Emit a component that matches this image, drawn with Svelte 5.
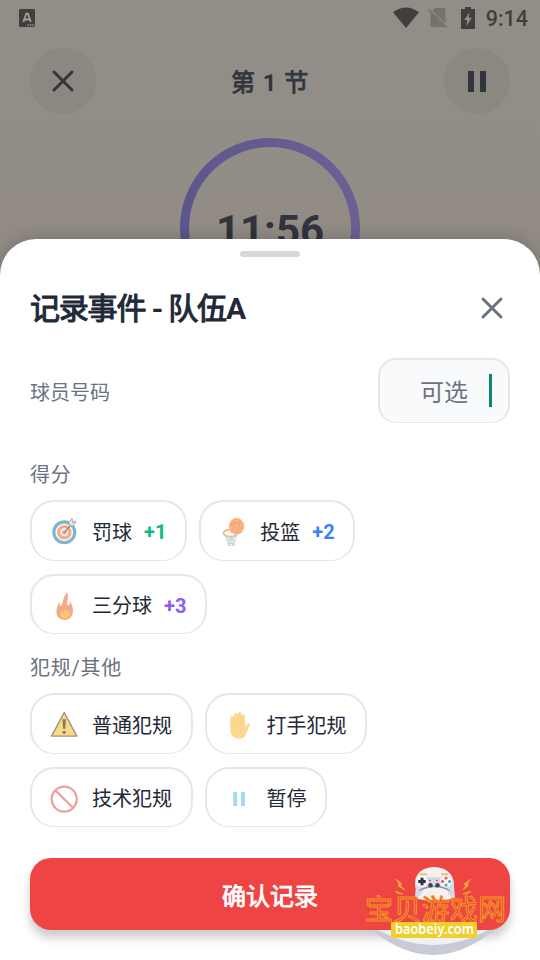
<script>
  const scores = [
    { label: '罚球', icon: 'target', points: '+1', color: '#10b981' },
    { label: '投篮', icon: 'basket', points: '+2', color: '#3b82f6' },
    { label: '三分球', icon: 'fire', points: '+3', color: '#8b5cf6' }
  ];
  const fouls = [
    { label: '普通犯规', icon: 'warning' },
    { label: '打手犯规', icon: 'hand' },
    { label: '技术犯规', icon: 'ban' },
    { label: '暂停', icon: 'pause' }
  ];
</script>

{#snippet icon(name)}
  <svg class="emoji" class:narrow={name === 'basket'} viewBox="0 0 28 28">
    {#if name === 'target'}
      <circle cx="14.3" cy="14.3" r="12" fill="#7fb2cf" />
      <circle cx="14.3" cy="14.3" r="8.9" fill="#f5f7f7" />
      <circle cx="14.3" cy="14.3" r="7.2" fill="#f4ac8a" />
      <circle cx="14.3" cy="14.3" r="4" fill="#fbf2ec" />
      <circle cx="14.3" cy="14.3" r="2.4" fill="#f2ac90" />
      <path d="M14.5 14.5 22 5.5" stroke="#8d8d8d" stroke-width="1.3" />
      <path d="M19.5 7.5 19 4.5l3-4 .5 4 3.5-.7-3.3 4.4z" fill="#f4f4f4" stroke="#9b9b9b" stroke-width=".9" />
      <path d="m21 6.5 5-5" stroke="#aaa" stroke-width=".8" />
    {:else if name === 'basket'}
      <g transform="translate(3 0) scale(.92 1)">
        <ellipse cx="9.2" cy="15.1" rx="7.7" ry="3.5" fill="#fffaf5" stroke="#f6b48b" stroke-width="1.8" />
        <g fill="none" stroke="#c0d6da" stroke-width=".9">
          <path d="M4 17 7.2 27.5M8 18l1 9.5M12 18l-.5 9.5M16 17l-3 10.5M4 18l5 5 4 4.5M8 18l6 6M16 17l-7 6-2 4.5M12 18l-6 6" />
          <path d="M5 22h10M6 25.5h8M7.2 27.5h6" />
        </g>
        <circle cx="15.8" cy="8.3" r="8.3" fill="#fbb483" />
        <path d="M10.4 2.2Q19.6 6 23.1 12M8.1 6Q15.6 7 20.1 15M13.6.5q-1 9-3.3 14M19.6 1.2q-.5 7-5 15M23.4 6q-5-2-14 0" fill="none" stroke="#ee9f74" stroke-width=".7" />
      </g>
    {:else if name === 'fire'}
      <g transform="translate(1.8 0) scale(.9 1)">
        <path d="M16.5.1c3 4.2.3 7.8.6 11.2.1 1.6.8 2.4 1.7 2 1.4-.5 1.4-2 .9-3.700 3 2 3.700 5.400 3.700 9.400 0 5.300-3.900 8.900-9.300 8.900-5.400 0-9-3.600-9-8.200 0-4 2.400-6.100 2.200-9.600 1.500 1.300 1.900 2.500 1.800 4.400 2.600-1.600 3.100-3.800 3.500-6.400.5-3 3.200-5 3.900-8Z" fill="#f2aa88" />
        <path d="M14.7 14.6c1.700 3.500-.1 4.100 1 5.100 1 .6 1.400-.6 1.200-1.600 2.200 1.200 3 2.900 2 5.200-.9 2.400-2.600 3.300-5 3.300-3.100 0-4.800-2.100-4.500-4.300.3-1.800 1.500-2.600 1.700-4.100q1.400 1.400 1.100 3c2.300-1.700 3.100-3.800 2.500-6.600Z" fill="#fccd66" />
      </g>
    {:else if name === 'warning'}
      <path d="M14.2 1.6 26.9 25.1H1.5Z" fill="#fbd983" stroke="#999284" stroke-width="1.3" stroke-linejoin="round" />
      <path d="M12.5 8.3h3.3l-.5 9.4h-2.3z" fill="#827966" /><circle cx="14.2" cy="21.3" r="1.6" fill="#827966" />
    {:else if name === 'hand'}
      <g transform="translate(2 .5) scale(.9 .96)">
        <g fill="none" stroke="#fbd98f" stroke-linecap="round" stroke-width="4">
          <path d="M5.8 15V6.8M10 14V3.6M14.2 14V2.5M18.2 15V5" />
        </g>
        <path d="M3.8 11h16.4v6.2l1.9-3.6q1.1-1.8 2.6-1.2c1.1.6.6 1.8.1 3l-3.9 8.7q-2.4 4.9-7.6 4.3C7.4 28.2 3.8 24.4 3.8 19Z" fill="#fbd98f" />
        <path d="M20.1 17q-5.8 0-6.8 6.5M7.9 6v8M12.1 4v9M16.2 4v10" fill="none" stroke="#f2cb80" stroke-width=".7" />
      </g>
    {:else if name === 'ban'}
      <circle cx="14.2" cy="14.1" r="12.5" fill="none" stroke="#eba19d" stroke-width="2.3" />
      <path d="m5.5 5.5 17.5 17.3" stroke="#eba19d" stroke-width="2.3" />
    {:else}
      <path d="M8.2 7h4v14h-4zM16 7h4v14h-4z" fill="#9fdbed" />
    {/if}
  </svg>
{/snippet}

{#snippet cross()}
  <svg class="cross" viewBox="0 0 30 30"><path d="m6 6 18 18M24 6 6 24" /></svg>
{/snippet}

<div class="screen">
  <div class="status">
    <svg class="ime" viewBox="0 0 16 18">
      <rect width="16" height="18" rx="1.2" fill="#403f3b" />
      <path d="m4.3 13 3-8.4h1.6L11.8 13M5.5 10.5h5" fill="none" stroke="#a19e96" stroke-width="1.8" />
      <path d="M8.5 16h1.4m1 0h1.4m1 0h1.4" stroke="#a19e96" stroke-width="1.3" />
    </svg>
    <div class="signals">
      <svg width="26" height="22" viewBox="0 0 26 22"><path d="M0 5.3Q13-4.5 26 5.3L13 21Z" fill="#403f3b" /></svg>
      <svg width="20" height="22" viewBox="0 0 20 22">
        <path d="M7 1h9q1.5 0 1.5 1.5v14L4.5 3.5ZM2.5 5.5 17 19.500q-.4.5-1 .5H4q-1.500 0-1.500-1.500Z" fill="#74726d" />
        <path d="m.7 2.6 18 18" stroke="#74726d" stroke-width="1.6" />
      </svg>
      <svg width="14" height="22" viewBox="0 0 14 22">
        <path d="M4 0h6v2h4v20H0V2h4Z" fill="#403f3b" /><path d="M8.6 5.2 3.2 13h3l-.7 6 5.3-8.2H7.7Z" fill="#918e87" />
      </svg>
      <span class="clock">9:14</span>
    </div>
  </div>

  <header>
    <button class="round" aria-label="关闭">{@render cross()}</button>
    <h2>第 <em>1</em> 节</h2>
    <button class="round" aria-label="暂停"><svg width="18" height="21" viewBox="0 0 18 21"><path d="M0 0h6v21H0zM12 0h6v21h-6z" fill="#32353f" /></svg></button>
  </header>

  <div class="timer">
    <svg viewBox="0 0 180 180">
      <defs><linearGradient id="ring"><stop stop-color="#5d568d" /><stop offset="1" stop-color="#6c6093" /></linearGradient></defs>
      <circle cx="90" cy="90" r="85.5" fill="none" stroke="url(#ring)" stroke-width="9" />
    </svg>
    <span>11:56</span>
  </div>

  <section class="sheet">
    <div class="handle"></div>
    <div class="title-row">
      <h1>记录事件 <em>-</em> 队伍<em>A</em></h1>
      <button class="close" aria-label="关闭">{@render cross()}</button>
    </div>
    <div class="player">
      <span class="caption">球员号码</span>
      <div class="field"><span>可选</span><i></i></div>
    </div>
    <h3>得分</h3>
    <div class="chips">
      {#each scores as item}
        <button class="chip">{@render icon(item.icon)}<span>{item.label}</span><b style="color: {item.color}">{item.points}</b></button>
      {/each}
    </div>
    <h3 class="second">犯规/其他</h3>
    <div class="chips">
      {#each fouls as item}
        <button class="chip">{@render icon(item.icon)}<span>{item.label}</span></button>
      {/each}
    </div>
    <button class="confirm">确认记录</button>
  </section>

  <svg class="watermark" viewBox="0 0 160 100">
    <path d="M12 70Q73 120 134 70Z" fill="#c9cad8" />
    <path d="M18 70Q73 100 128 70Z" fill="#f1f1f3" />
    <path d="M55 25Q55 8 74 7Q93 8 94 25L91 39Q75 43 58 39Z" fill="#f4f1ef" />
    <path d="M60 14.500q4-1 7 0M81 14.500q4-1 7 0" stroke="#e9b945" stroke-width="1.500" fill="none" />
    <path d="M56 17q5-3 12 0h12q7-3 12 0 2 4 2 10l1 10q-2 3-5-1l-4-7q-11-5-22 0l-4 7q-4 4-5 0l1-10q-1-6 0-9Z" fill="#d8dae5" />
    <path d="M59 30.500q16-8 31 0" stroke="#8f95a4" stroke-width="1.300" fill="none" />
    <circle cx="62" cy="21.5" r="6" fill="#f4f3f5" /><circle cx="86" cy="21.5" r="6" fill="#f4f3f5" />
    <path d="M62 17.8v7.5M58.2 21.5h7.500" stroke="#28344a" stroke-width="3" />
    <g fill="#e85656"><circle cx="86" cy="18" r="1.5" /><circle cx="82.5" cy="21.5" r="1.5" /></g>
    <g fill="#4ba3b8"><circle cx="89.5" cy="21.5" r="1.5" /><circle cx="86" cy="25" r="1.5" /></g>
    <circle cx="70.500" cy="25.300" r="2.200" fill="#35445b" /><circle cx="77.500" cy="25.300" r="2.200" fill="#35445b" />
    <path d="M69 20.500h2m5 0h2" stroke="#e85656" stroke-width="1.3" />
    <path d="m36 19 6 5-2 1 5 5-7-4 1-2zM111 19l-7 5 2 1-3 5 6-5-2-1zM35 31l8 3-5-.5zM111 31l-8 3 5-.5z" fill="#f5b43f" stroke="#f5a52e" stroke-width=".7" />
    <text class="brand" x="5" y="59.500" textLength="141">宝贝游戏网</text>
    <rect x="31" y="62" width="86" height="16" fill="#efcf2c" />
    <text class="domain" x="35" y="74" textLength="79" lengthAdjust="spacingAndGlyphs">baobeiy.com</text>
  </svg>
</div>

<style>
  :global(body) { margin: 0; }
  .screen, .screen * { box-sizing: border-box; }
  .screen { position: relative; width: 540px; height: 960px; overflow: hidden; background: linear-gradient(#918e87 0, #928e87 90px, #918b84 240px); font-family: Roboto, "Noto Sans CJK SC", sans-serif; }
  button { border: 0; padding: 0; margin: 0; font: inherit; display: flex; align-items: center; }
  svg { display: block; flex: none; }
  h1, h2, h3 { margin: 0; }
  em { font-style: normal; font-weight: 700; -webkit-text-stroke: 0; }
  .status { height: 36px; padding: 0 12px 0 19px; display: flex; align-items: center; justify-content: space-between; }
  .ime { width: 16px; height: 18px; }
  .signals { display: flex; align-items: center; }
  .signals svg { margin-bottom: 1px; }
  .signals svg:nth-child(2) { margin-left: 9px; }
  .signals svg:nth-child(3) { margin-left: 13px; }
  .clock { margin-left: 11px; font-size: 21.5px; line-height: 34px; font-weight: 500; color: #403f3b; padding-top: 2px; }
  header { padding: 12px 30px 0; display: flex; align-items: center; justify-content: space-between; }
  .round { width: 66px; height: 66px; border-radius: 50%; background: #8b8881; justify-content: center; }
  .cross { width: 30px; height: 30px; fill: none; stroke: #32353f; stroke-width: 3; stroke-linecap: round; }
  h2 { font-size: 24px; line-height: 34px; padding-top: 3px; font-weight: 400; -webkit-text-stroke: .9px #32353f; color: #32353f; letter-spacing: .9px; }
  .timer { display: grid; width: 180px; height: 180px; margin: 24px auto 0; place-items: center; }
  .timer svg { width: 180px; height: 180px; grid-area: 1 / 1; }
  .timer span { grid-area: 1 / 1; font-size: 42px; font-weight: 700; color: #31343b; padding-top: 5px; }
  .sheet { position: absolute; left: 0; top: 239px; width: 540px; height: 721px; border-radius: 36px 36px 0 0; background: #fff; padding: 12px 30px 0; box-shadow: 0 0 18px #0003; }
  .handle { width: 60px; height: 6px; border-radius: 3px; background: #d8d8d8; margin: 0 auto; }
  .title-row { display: flex; align-items: center; justify-content: space-between; margin-top: 30px; height: 42px; }
  h1 { font-size: 30px; line-height: 42px; padding-top: 2px; letter-spacing: -1.2px; color: #1f2937; font-weight: 400; -webkit-text-stroke: 1.1px #1f2937; }
  .close { background: none; margin-right: 3px; }
  .close .cross { stroke: #6b7280; }
  .player { margin-top: 29px; height: 65px; display: flex; align-items: center; justify-content: space-between; color: #6b7280; font-size: 20px; }
  .caption { padding-top: 1px; }
  .field { width: 132px; height: 65px; border: 2px solid #e5e7eb; border-bottom-width: 1px; border-radius: 18px; background: #f9fafb; display: flex; align-items: center; justify-content: flex-end; padding: 0 16px 1px 0; font-size: 24px; }
  .field i { width: 3px; height: 33px; background: #0d8474; margin-left: 21px; }
  h3 { margin-top: 37px; font-size: 20px; line-height: 30px; font-weight: 400; letter-spacing: .75px; color: #6b7280; }
  .second { margin-top: 19px; }
  .chips { display: flex; flex-wrap: wrap; gap: 13px 12px; margin-top: 10px; }
  .chip { height: 60.5px; border: 2px solid #e5e7eb; border-bottom-width: 1px; border-radius: 24px; background: #fff; padding: 3px 18.5px 0 18px; color: #1f2937; font-size: 20px; line-height: 28px; }
  .chip span { padding-top: 1px; }
  .emoji { width: 28px; height: 28px; margin-right: 14px; }
  .narrow { margin-right: 13.4px; }
  .chip b { margin-left: 12px; }
  .confirm { width: 480px; height: 72px; margin-top: 31px; border-radius: 21px; background: #ef4444; color: #fff; font-size: 24px; font-weight: 400; -webkit-text-stroke: .8px #fff; justify-content: center; box-shadow: 0 8px 10px #0003; }
  .watermark { position: absolute; left: 360px; top: 860px; width: 160px; height: 100px; }
  .brand { font: 28px "Noto Sans CJK SC", sans-serif; fill: #ef4444; stroke: #f49a20; stroke-width: 1px; }
  .domain { font: 600 15px "Noto Sans", sans-serif; fill: #fff; }
</style>
